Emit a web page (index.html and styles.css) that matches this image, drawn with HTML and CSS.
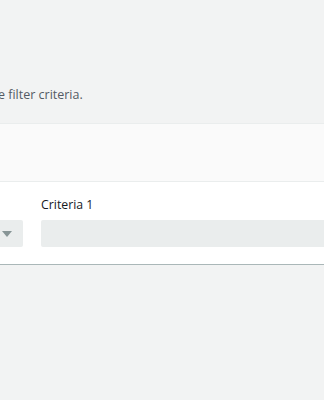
FILE: index.html
```
<!DOCTYPE html>
<html lang="en">
<head>
  <meta charset="UTF-8" />
  <title>Filter criteria</title>
  <link rel="stylesheet" href="styles.css">
</head>
<body>

  <div class="page">
    <p class="hint">Choose the filter criteria.</p>

    <section class="panel">
      <div class="panel-head"></div>
      <div class="panel-body">
        <div class="field field-op">
          <label class="label">&nbsp;</label>
          <div class="select"><span class="caret"></span></div>
        </div>
        <div class="field field-value">
          <label class="label">Criteria 1</label>
          <input class="input" type="text">
        </div>
      </div>
    </section>
  </div>

</body>
</html>
```

FILE: styles.css
```
  html, body {
    margin: 0;
    padding: 0;
    background-color: #f2f3f3;
    font-family: 'Open Sans', 'Noto Sans', sans-serif;
    overflow: hidden;
  }

  .page {
    padding-top: 87px;
  }

  .hint {
    margin: 0 0 20px -61px;
    font-size: 12.5px;
    line-height: 16px;
    color: #545b64;
  }

  .panel {
    margin: 0 -20px 0 -40px;
    background: #fff;
    border-top: 1px solid #eaeded;
    border-bottom: 1px solid #aab7b8;
    box-shadow: 0 1px 1px 0 rgba(0, 28, 36, 0.08);
  }

  .panel-head {
    height: 57px;
    background-color: #fafafa;
    border-bottom: 1px solid #eaeded;
  }

  .panel-body {
    display: flex;
    gap: 18px;
    padding: 14px 0 17px 0;
  }

  .field {
    display: flex;
    flex-direction: column;
    gap: 6px;
  }

  .field-op {
    width: 63px;
  }

  .field-value {
    flex: 1;
  }

  .label {
    font-size: 12.3px;
    line-height: 18px;
    color: #16191f;
  }

  .select, .input {
    height: 27px;
    box-sizing: border-box;
    background-color: #eaeded;
    border: none;
    border-radius: 2px;
  }

  .select {
    display: flex;
    align-items: center;
    justify-content: flex-end;
    padding-right: 11px;
  }

  .caret {
    width: 0;
    height: 0;
    border-left: 5px solid transparent;
    border-right: 5px solid transparent;
    border-top: 6px solid #879596;
  }
```
